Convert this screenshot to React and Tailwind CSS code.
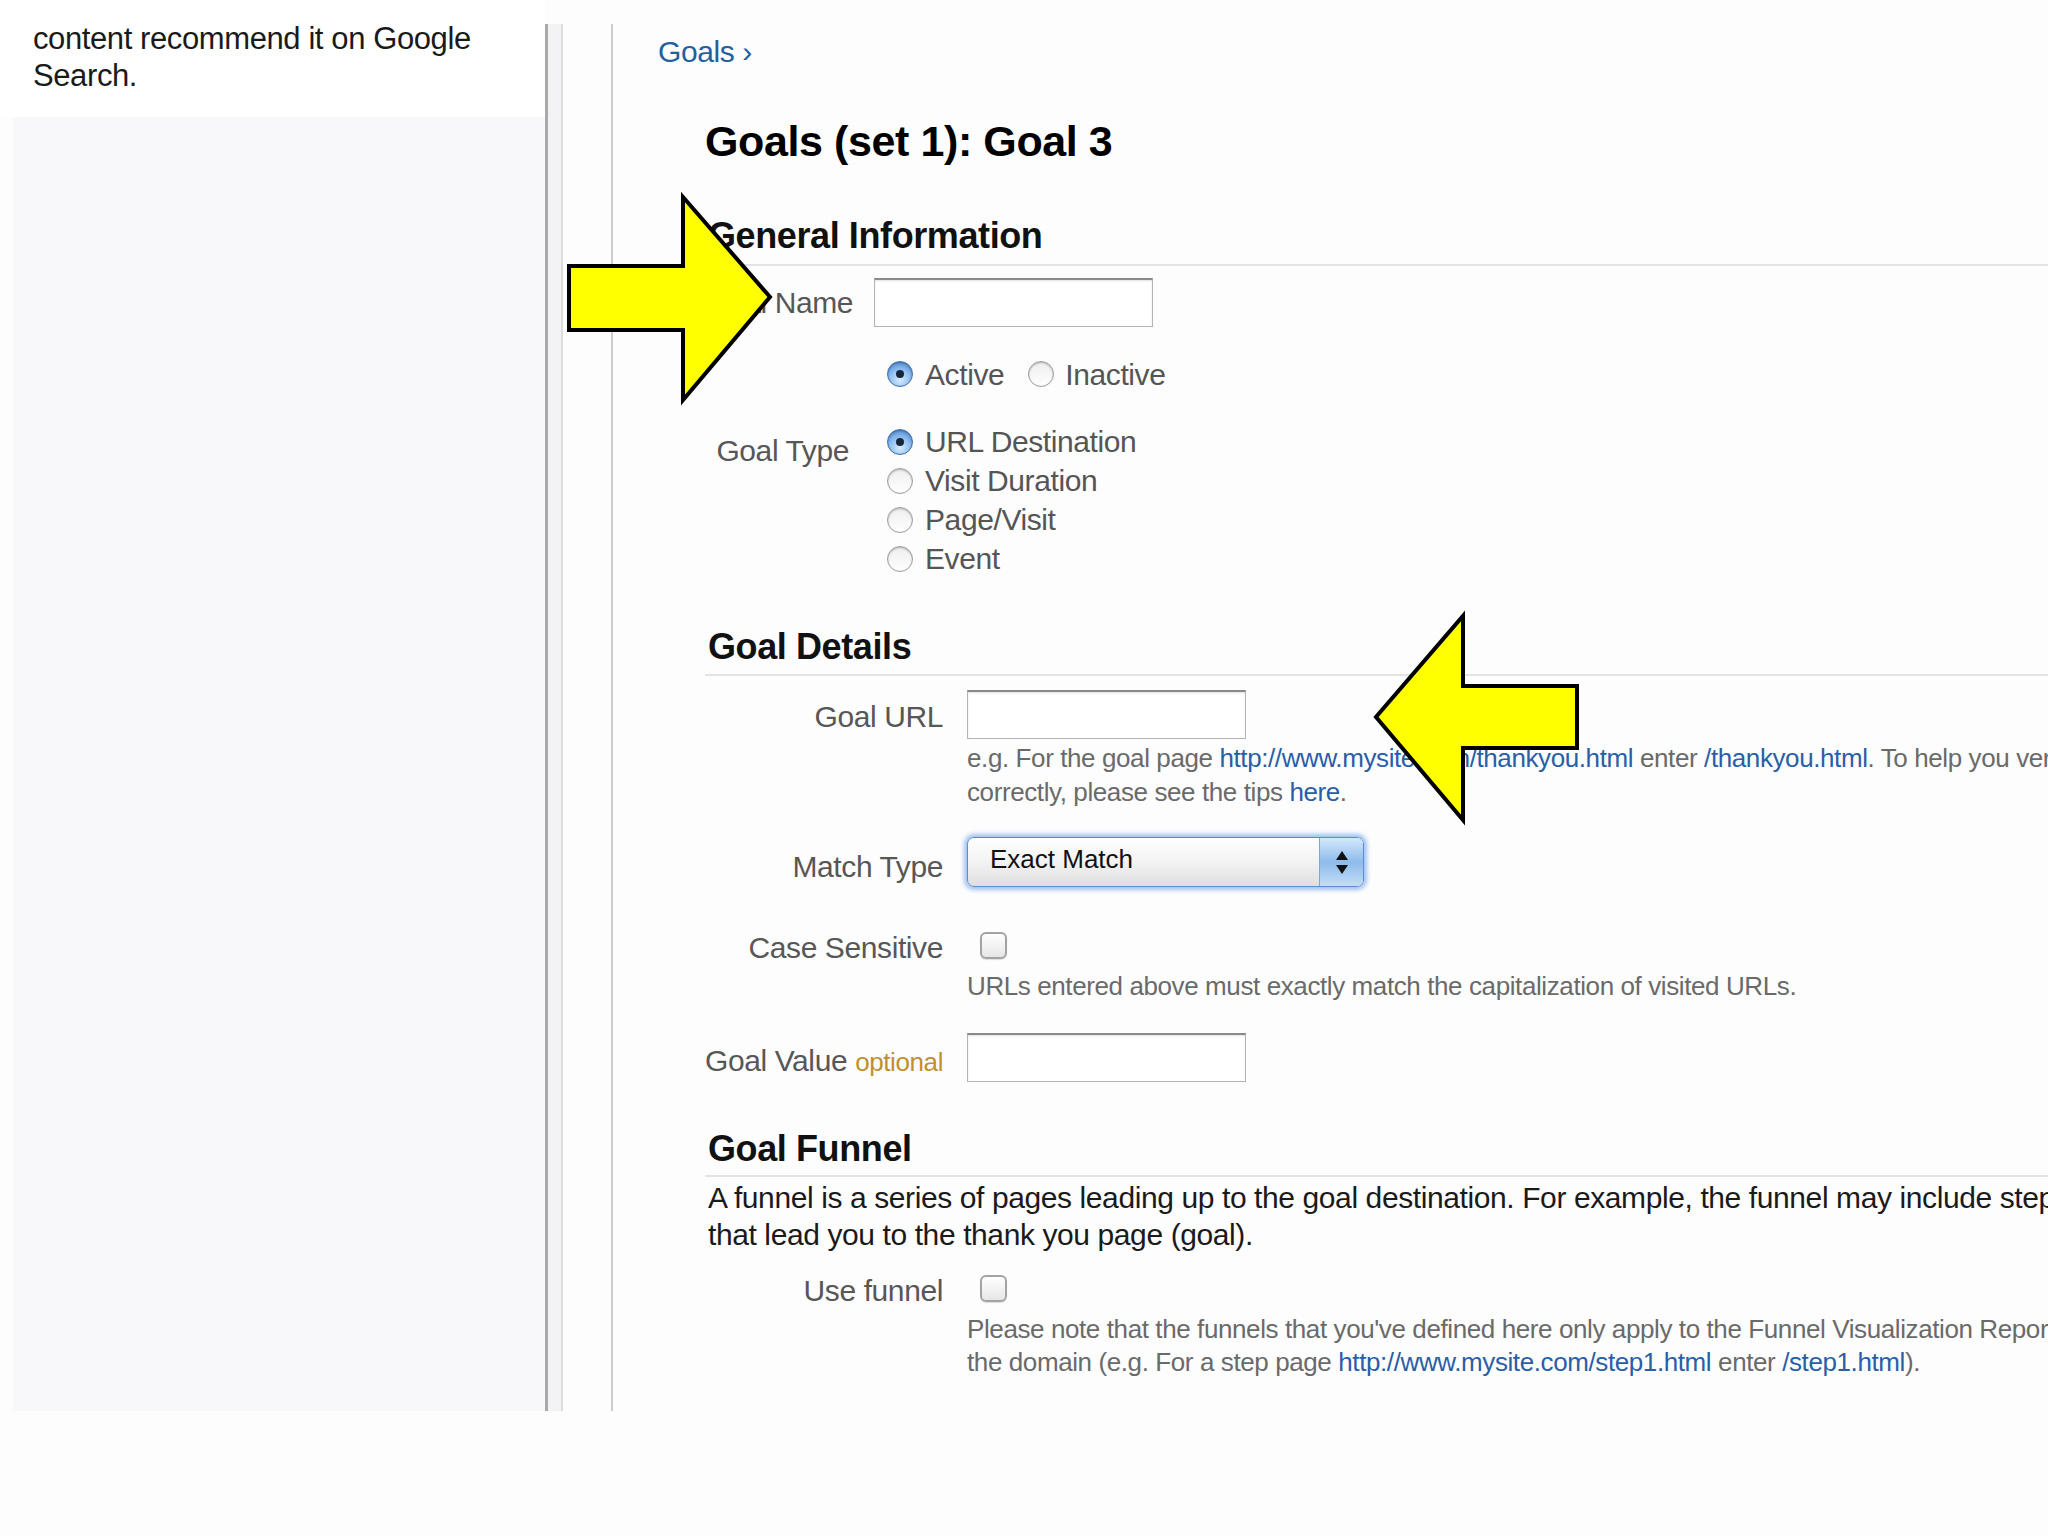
import React from 'react';

const Radio = ({ checked }) => (
  <span
    className={`inline-flex h-[26px] w-[26px] shrink-0 items-center justify-center rounded-full border ${
      checked
        ? 'border-[#3f6ea8] bg-[radial-gradient(circle_at_50%_75%,#d6ecff_0%,#8cbcf0_50%,#3d7cc8_100%)]'
        : 'border-[#9c9c9c] bg-linear-to-b from-[#eeeeee] to-[#ffffff]'
    } shadow-[inset_0_1px_2px_rgba(0,0,0,0.25)]`}
  >
    {checked && <span className="h-[8px] w-[8px] rounded-full bg-[#18263a]" />}
  </span>
);

const Checkbox = () => (
  <span className="inline-block h-[27px] w-[27px] rounded-[6px] border-2 border-[#a3a3a3] bg-linear-to-b from-[#ffffff] to-[#e6e6e6] shadow-[0_1px_1px_rgba(0,0,0,0.12)]" />
);

const TextInput = () => (
  <div className="h-[49px] w-[279px] shrink-0 border border-[#b4b4b4] border-t-2 border-t-[#8a8a8a] bg-white shadow-[inset_0_1px_2px_rgba(0,0,0,0.12)]" />
);

const Link = ({ children }) => <span className="text-[#2a5fa6]">{children}</span>;

const SectionHead = ({ children, className = '' }) => (
  <div className={`border-b-2 border-[#e3e3e6] pl-[3px] text-[36px] font-bold leading-[44px] text-[#111] ${className}`}>
    {children}
  </div>
);

const App = () => {
  return (
    <div className="relative h-[1536px] w-[2048px] overflow-hidden bg-[#fdfdfe] font-['Liberation_Sans',Arial,sans-serif] tracking-[-0.025em]">
      <div className="flex h-[1411px]">
        {/* left sidebar */}
        <div className="flex w-[545px] shrink-0 flex-col">
          <div className="h-[117px] whitespace-nowrap bg-white pl-[33px] pt-[20px] text-[31px] leading-[37px] text-[#1a1a1a]">
            content recommend it on Google
            <br />
            Search.
          </div>
          <div className="ml-[13px] flex-1 bg-[#f8f7f9]" />
        </div>

        {/* splitter */}
        <div className="mt-[24px] w-[3px] shrink-0 bg-[#a9a9a9]" />
        <div className="mt-[24px] w-[13px] shrink-0 bg-[#f3f3f5]" />
        <div className="mt-[24px] w-[2px] shrink-0 bg-[#dcdcdf]" />
        <div className="w-[48px] shrink-0 bg-[#fdfdfe]" />
        <div className="mt-[24px] w-[2px] shrink-0 bg-[#cdcdd0]" />

        {/* main */}
        <div className="min-w-0 flex-1 pl-[45px] pt-[34px]">
          <div className="text-[30px] leading-[36px] text-[#24609e]">Goals ›</div>

          <div className="ml-[47px]">
            <h1 className="mt-[46px] text-[43px] font-bold leading-[50px] text-black">Goals (set 1): Goal 3</h1>

            <SectionHead className="mt-[48px] pb-[6px]">General Information</SectionHead>

            <div className="mt-[12px] flex items-center gap-[25px]">
              <div className="w-[144px] shrink-0 whitespace-nowrap text-right text-[30px] leading-[30px] text-[#575757]">Goal Name</div>
              <TextInput />
            </div>

            <div className="mt-[32px] flex h-[30px] items-center pl-[182px] text-[30px] text-[#555]">
              <Radio checked />
              <span className="ml-[12px]">Active</span>
              <span className="ml-[24px] flex">
                <Radio />
              </span>
              <span className="ml-[11px]">Inactive</span>
            </div>

            <div className="mt-[33px] flex gap-[25px]">
              <div className="w-[144px] shrink-0 whitespace-nowrap pt-[9px] text-right text-[30px] leading-[39px] text-[#575757]">Goal Type</div>
              <div className="pl-[13px] text-[30px] leading-[39px] text-[#555]">
                {[
                  ['URL Destination', true],
                  ['Visit Duration', false],
                  ['Page/Visit', false],
                  ['Event', false],
                ].map(([label, on]) => (
                  <div key={label} className="flex h-[39px] items-center gap-[12px] whitespace-nowrap">
                    <Radio checked={on} />
                    <span>{label}</span>
                  </div>
                ))}
              </div>
            </div>

            <SectionHead className="mt-[47px] pb-[5px]">Goal Details</SectionHead>

            <div className="mt-[14px] flex items-center gap-[24px]">
              <div className="mt-[4px] w-[238px] shrink-0 text-right text-[30px] leading-[30px] text-[#575757]">Goal URL</div>
              <TextInput />
            </div>
            <div className="ml-[262px] mt-[2px] whitespace-nowrap text-[26px] leading-[34px] text-[#6a6a6a]">
              <div>
                e.g. For the goal page <Link>http://www.mysite.com/thankyou.html</Link> enter <Link>/thankyou.html</Link>. To
                help you verify that your goal is set up
              </div>
              <div>
                correctly, please see the tips <Link>here</Link>.
              </div>
            </div>

            <div className="mt-[28px] flex items-center gap-[24px]">
              <div className="mt-[10px] w-[238px] shrink-0 text-right text-[30px] leading-[30px] text-[#575757]">Match Type</div>
              <div className="flex h-[50px] w-[397px] shrink-0 rounded-[7px] border border-[#5b8fd4] bg-linear-to-b from-[#ffffff] via-[#f3f3f3] to-[#dedede] shadow-[0_0_4px_3px_rgba(110,160,230,0.65)]">
                <span className="flex-1 pl-[22px] text-[26px] leading-[42px] tracking-normal text-[#111]">Exact Match</span>
                <span className="flex w-[44px] flex-col items-center justify-center gap-[5px] rounded-r-[6px] border-l border-[#7ea6d6] bg-linear-to-b from-[#d4e8fb] via-[#8ebbeb] to-[#c3ddf7]">
                  <svg width="12" height="9" viewBox="0 0 12 9">
                    <polygon points="6,0 12,9 0,9" fill="#111" />
                  </svg>
                  <svg width="12" height="9" viewBox="0 0 12 9">
                    <polygon points="0,0 12,0 6,9" fill="#111" />
                  </svg>
                </span>
              </div>
            </div>

            <div className="mt-[43px] flex h-[30px] items-center gap-[24px]">
              <div className="mt-[6px] w-[238px] shrink-0 text-right text-[30px] leading-[30px] text-[#575757]">Case Sensitive</div>
              <span className="ml-[13px] flex">
                <Checkbox />
              </span>
            </div>
            <div className="ml-[262px] mt-[9px] whitespace-nowrap text-[26px] leading-[34px] text-[#6a6a6a]">
              URLs entered above must exactly match the capitalization of visited URLs.
            </div>

            <div className="mt-[30px] flex items-center gap-[24px]">
              <div className="mt-[8px] w-[238px] shrink-0 whitespace-nowrap text-right text-[30px] leading-[30px] text-[#575757]">
                Goal Value <span className="text-[26px] text-[#c0902f]">optional</span>
              </div>
              <TextInput />
            </div>

            <SectionHead className="mt-[45px] pb-[4px]">Goal Funnel</SectionHead>

            <div className="mt-[2px] whitespace-nowrap pl-[3px] text-[30px] leading-[37px] text-[#1a1a1a]">
              <div>A funnel is a series of pages leading up to the goal destination. For example, the funnel may include steps</div>
              <div>that lead you to the thank you page (goal).</div>
            </div>

            <div className="mt-[20px] flex h-[30px] items-center gap-[24px]">
              <div className="mt-[6px] w-[238px] shrink-0 text-right text-[30px] leading-[30px] text-[#575757]">Use funnel</div>
              <span className="ml-[13px] flex">
                <Checkbox />
              </span>
            </div>
            <div className="ml-[262px] mt-[10px] whitespace-nowrap text-[26px] leading-[33px] text-[#6a6a6a]">
              <div>Please note that the funnels that you've defined here only apply to the Funnel Visualization Report</div>
              <div>
                the domain (e.g. For a step page <Link>http://www.mysite.com/step1.html</Link> enter{' '}
                <Link>/step1.html</Link>).
              </div>
            </div>
          </div>
        </div>
      </div>

      {/* annotation arrows drawn over the screenshot */}
      <svg className="pointer-events-none absolute left-0 top-0" width="2048" height="1536" viewBox="0 0 2048 1536">
        <polygon
          points="569,266 683,266 683,197 770,297 683,400 683,330 569,330"
          fill="#ffff00"
          stroke="#000"
          strokeWidth="4"
          strokeLinejoin="miter"
        />
        <polygon
          points="1577,686 1463,686 1463,616 1376,717 1463,820 1463,748 1577,748"
          fill="#ffff00"
          stroke="#000"
          strokeWidth="4"
          strokeLinejoin="miter"
        />
      </svg>
    </div>
  );
};

export default App;
